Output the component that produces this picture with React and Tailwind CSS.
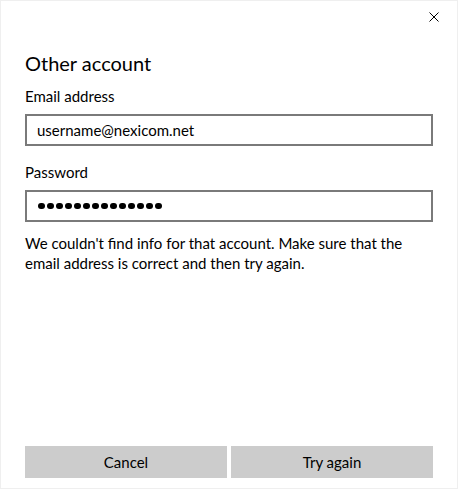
import React from "react";

const CloseIcon = () => (
  <svg width="10" height="10" viewBox="0 0 10 10" fill="none">
    <path d="M0.5 0.5L9.5 9.5M9.5 0.5L0.5 9.5" stroke="#000" strokeWidth="1" />
  </svg>
);

export default function App() {
  return (
    <div className="w-[458px] h-[489px] bg-white border border-[#efefef] flex flex-col text-black font-['Lato','Noto_Sans',Arial,sans-serif]">
      <div className="flex justify-end pr-[7px]">
        <button className="w-8 h-8 flex items-center justify-center">
          <CloseIcon />
        </button>
      </div>

      <div className="px-[24px] flex flex-col">
        <h1 className="mt-[16px] text-[20px] leading-[28px] font-normal">Other account</h1>

        <label className="mt-[9px] text-[15px] leading-[20px]">Email address</label>
        <div className="mt-[8px] h-[32px] border-2 border-[#7a7a7a] flex items-center px-[10px] text-[15px]">
          username@nexicom.net
        </div>

        <label className="mt-[16px] text-[15px] leading-[20px]">Password</label>
        <div className="mt-[8px] h-[32px] border-2 border-[#7a7a7a] flex items-center px-[11px] gap-[2.5px]">
          {Array.from({ length: 14 }).map((_, i) => (
            <span key={i} className="w-[6.5px] h-[6.5px] rounded-full bg-black" />
          ))}
        </div>

        <p className="mt-[11px] text-[15px] leading-[20px]">
          We couldn't find info for that account. Make sure that the email address is correct and then try again.
        </p>
      </div>

      <div className="mt-auto px-[24px] pb-[10px] flex gap-[4px]">
        <button className="flex-1 h-[32px] bg-[#cccccc] text-[15px]">Cancel</button>
        <button className="flex-1 h-[32px] bg-[#cccccc] text-[15px]">Try again</button>
      </div>
    </div>
  );
}
